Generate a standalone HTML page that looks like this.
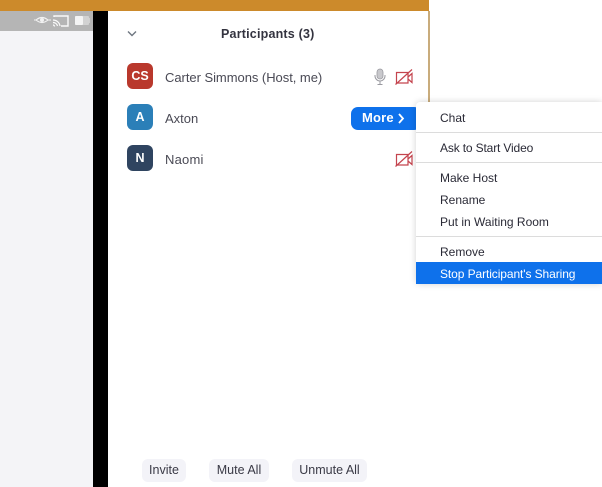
<!DOCTYPE html>
<html><head><meta charset="utf-8">
<style>
html,body{margin:0;padding:0;background:#fff}
#p{position:relative;width:602px;height:487px;overflow:hidden;background:#fff;font-family:"Liberation Sans",sans-serif;color:#232333}
#p div{position:absolute}
.t{white-space:nowrap;font-size:12px;line-height:16px;color:#2a2a36;left:440px}
.n{white-space:nowrap;font-size:13px;line-height:16px;color:#4a4a55;left:165px}
.av{left:127px;width:26px;height:26px;border-radius:6px;color:#fff;font-weight:bold;font-size:12.5px;line-height:26px;text-align:center}
.sep{left:416px;width:186px;height:1px;background:#dcdcdc}
.btn{top:459px;height:23px;border-radius:6px;background:#f3f3f8;font-size:12.5px;line-height:23px;text-align:center;color:#3a3a46}
svg{position:absolute}
</style></head><body>
<div id="p">
<div style="left:0;top:11px;width:93px;height:20px;background:#b5b5b5"></div>
<div style="left:0;top:31px;width:93px;height:456px;background:#f4f4f7"></div>
<div style="left:93px;top:11px;width:15px;height:476px;background:#000"></div>
<div style="left:0;top:0;width:429px;height:11px;background:#cc8a2b"></div>
<div style="left:428px;top:11px;width:2px;height:92px;background:#c9ac7c"></div>

<svg style="left:34px;top:13px" width="60" height="16" viewBox="0 0 60 16" fill="none">
<path d="M2 7 Q8 2 14 7 Q8 12 2 7Z M0 7H2 M14 7H17" stroke="#f2f2f2" stroke-width="1.1"/>
<circle cx="8" cy="7" r="2" fill="#f2f2f2"/>
<path d="M20 4V3H34V13H27" stroke="#fafafa" stroke-width="1.4"/>
<path d="M19 7A7 7 0 0 1 26 13M19 9.5A4.5 4.5 0 0 1 23.5 13M19 12A1.5 1.5 0 0 1 20.5 13.5" stroke="#fafafa" stroke-width="1.2"/>
<rect x="41" y="3" width="14" height="9" rx="1" fill="#d2d2d2"/>
<rect x="41" y="3" width="8" height="9" rx="1" fill="#f4f4f4"/>
<rect x="55" y="5" width="1" height="5" fill="#d0d0d0"/>
</svg>

<svg style="left:127px;top:30px" width="10" height="8" viewBox="0 0 10 8" fill="none"><path d="M1 1.5L5 5.5L9 1.5" stroke="#6e7680" stroke-width="1.4"/></svg>
<div style="left:221px;top:26px;white-space:nowrap;font-size:12.5px;line-height:16px;font-weight:bold;color:#33333f;letter-spacing:.2px">Participants (3)</div>

<div class="av" style="top:63px;background:#b9382c">CS</div>
<div class="av" style="top:104px;background:#2b7fb8">A</div>
<div class="av" style="top:145px;background:#2f4460">N</div>
<div class="n" style="top:70px;letter-spacing:-.04px">Carter Simmons (Host, me)</div>
<div class="n" style="top:111px">Axton</div>
<div class="n" style="top:152px;letter-spacing:.2px">Naomi</div>

<svg style="left:373px;top:68px" width="14" height="18" viewBox="0 0 14 18" fill="none">
<rect x="4" y="1" width="6" height="10" rx="3" fill="#c8c8cc" stroke="#9a9aa0" stroke-width=".8"/>
<path d="M2 7V8A5 5 0 0 0 12 8V7M7 13V16M4.5 16.5H9.5" stroke="#9a9aa0" stroke-width="1"/>
</svg>
<svg style="left:395px;top:69px" width="20" height="16" viewBox="0 0 20 16" fill="none" stroke="#c4444e" stroke-width="1.2">
<path d="M1.5 3.5H13V14H1.5Z M13 8L17 4.5V13.5L13 10"/><path d="M0.5 15.5L17 0.5"/></svg>
<svg style="left:395px;top:151px" width="20" height="16" viewBox="0 0 20 16" fill="none" stroke="#c4444e" stroke-width="1.2">
<path d="M1.5 3.5H13V14H1.5Z M13 8L17 4.5V13.5L13 10"/><path d="M0.5 15.5L17 0.5"/></svg>

<div style="left:351px;top:107px;width:70px;height:23px;border-radius:7px;background:#0e71eb"></div>
<div style="left:362px;top:110px;white-space:nowrap;font-size:13px;line-height:16px;font-weight:bold;color:#fff;letter-spacing:.2px">More</div>
<svg style="left:397px;top:113px" width="8" height="11" viewBox="0 0 8 11" fill="none"><path d="M2 1L6 5.5L2 10" stroke="#fff" stroke-width="1.8"/></svg>

<div style="left:416px;top:102px;width:186px;height:182px;background:#fff;border-radius:4px 0 0 4px;box-shadow:0 0 7px rgba(0,0,0,.18)"></div>
<div class="t" style="top:110px">Chat</div>
<div class="sep" style="top:132px"></div>
<div class="t" style="top:140px;letter-spacing:-.15px">Ask to Start Video</div>
<div class="sep" style="top:162px"></div>
<div class="t" style="top:170px">Make Host</div>
<div class="t" style="top:192px">Rename</div>
<div class="t" style="top:214px">Put in Waiting Room</div>
<div class="sep" style="top:236px"></div>
<div class="t" style="top:244px">Remove</div>
<div style="left:416px;top:262px;width:186px;height:22px;background:#0e71eb"></div>
<div class="t" style="top:266px;color:#fff;letter-spacing:-.09px">Stop Participant's Sharing</div>

<div class="btn" style="left:142px;width:44px">Invite</div>
<div class="btn" style="left:209px;width:60px">Mute All</div>
<div class="btn" style="left:292px;width:75px">Unmute All</div>
</div>
</body></html>
